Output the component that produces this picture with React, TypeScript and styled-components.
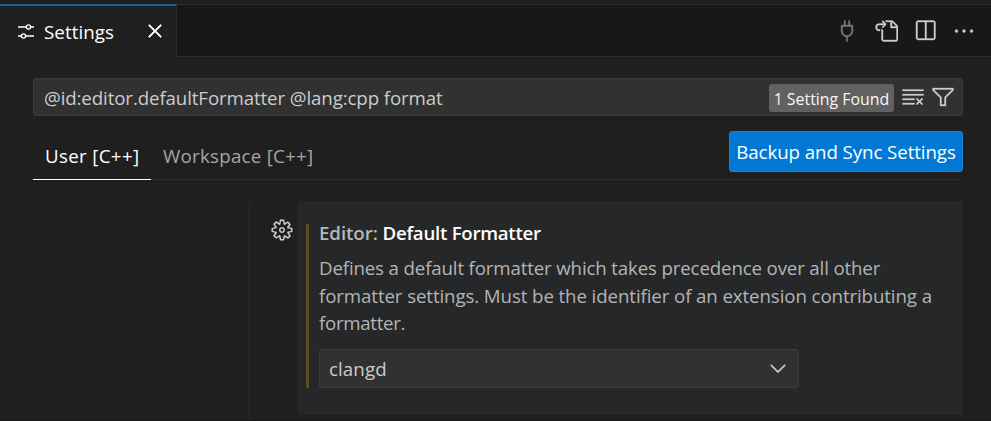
import React from "react";
import styled, { createGlobalStyle } from "styled-components";
import {
  VscChevronDown,
  VscClearAll,
  VscClose,
  VscEllipsis,
  VscFilter,
  VscGoToFile,
  VscPlug,
  VscSplitHorizontal,
} from "react-icons/vsc";

const GlobalStyle = createGlobalStyle`
  * { box-sizing: border-box; }
  body {
    margin: 0;
    overflow: hidden;
    background: #1f1f1f;
    font-family: "Open Sans", "Noto Sans", sans-serif;
    font-size: 18.7px;
    color: #cccccc;
  }
  button { font: inherit; }
  svg { display: block; flex: none; }
`;

const Text = styled.span<{ $track?: number }>`
  white-space: nowrap;
  letter-spacing: ${(p) => p.$track ?? 0}px;
`;

const Window = styled.div`
  height: 421px;
  display: flex;
  flex-direction: column;
  padding-top: 4px;
  border-bottom: 1px solid #181818;
`;

const TabBar = styled.header`
  height: 53px;
  flex: none;
  display: flex;
  background: #181818;
`;

const Tab = styled.div`
  width: 177px;
  display: flex;
  align-items: center;
  padding: 0 9px 1px 14px;
  background: #1f1f1f;
  border-top: 2px solid #16639d;
  border-right: 1px solid #2b2b2b;
  color: #ffffff;
`;

const TabTitle = styled.div`
  flex: 1;
  margin: 1px 0 0 6px;
`;

const Actions = styled.div`
  flex: 1;
  display: flex;
  justify-content: flex-end;
  align-items: center;
  gap: 15px;
  padding-right: 15px;
  border-top: 1px solid #2b2b2b;
  border-bottom: 1px solid #2b2b2b;
`;

const Action = styled.span<{ $dim?: boolean }>`
  display: flex;
  color: ${(p) => (p.$dim ? "#787878" : "#cccccc")};

  svg { stroke-width: 0.25; }
`;

const Page = styled.main`
  flex: 1;
  min-height: 0;
  display: flex;
  flex-direction: column;
  padding: 21px 28px 0 33px;
`;

const Search = styled.div`
  height: 38px;
  flex: none;
  display: flex;
  align-items: center;
  padding: 0 7px 0 10px;
  background: #313131;
  border: 1px solid #3c3c3c;
  border-radius: 3px;
`;

const Query = styled.div`
  flex: 1;
`;

const Count = styled.div`
  width: 125px;
  height: 28px;
  display: flex;
  align-items: center;
  justify-content: center;
  margin: 1px 7px 0 0;
  padding-top: 2px;
  background: #616161;
  border-radius: 3px;
  color: #f8f8f8;
  font-size: 15.9px;
`;

const SearchIcons = styled.div`
  display: flex;
  gap: 6px;

  svg { stroke-width: 0.2; }
`;

const Scopes = styled.nav`
  height: 64px;
  flex: none;
  display: flex;
  align-items: flex-end;
  border-bottom: 1px solid #2b2b2b;
`;

const Scope = styled.div<{ $active?: boolean }>`
  height: 48px;
  width: ${(p) => (p.$active ? "118px" : "auto")};
  display: flex;
  align-items: center;
  margin-bottom: -1px;
  padding: 0 0 0 12px;
  color: ${(p) => (p.$active ? "#ffffff" : "#a6a6a6")};
  border-bottom: 1px solid ${(p) => (p.$active ? "#ffffff" : "transparent")};
`;

const SyncButton = styled.button`
  width: 234px;
  height: 41px;
  margin: 0 0 7px auto;
  padding: 0;
  border: 1px solid #1684da;
  border-radius: 3px;
  background: #0078d4;
  color: #ffffff;
`;

const Body = styled.div`
  flex: 1;
  min-height: 0;
  display: flex;
  margin-top: 21px;
`;

const TocColumn = styled.div`
  width: 217px;
  border-right: 1px solid #2b2b2b;
`;

const GearColumn = styled.div`
  width: 48px;
  padding: 17px 0 0 20px;
`;

const Setting = styled.section`
  flex: 1;
  height: 214px;
  padding: 23px 0 0 8px;
  background: #262728;
`;

const Modified = styled.div`
  height: 164px;
  padding-left: 10px;
  border-left: 3px solid #5f4c24;
`;

const Title = styled.div`
  height: 19px;
  line-height: 17px;
  font-weight: 600;
  color: #b8b8b8;
`;

const Name = styled(Text)`
  color: #ffffff;
`;

const Description = styled.div`
  display: flex;
  flex-direction: column;
  margin-top: 11px;
  line-height: 27.5px;
  color: #b4b4b4;
`;

const Select = styled.div`
  width: 480px;
  height: 39px;
  display: flex;
  align-items: center;
  justify-content: space-between;
  margin-top: 12px;
  padding: 0 8px 0 9px;
  background: #313131;
  border: 1px solid #3c3c3c;
  border-radius: 3px;

  svg { stroke-width: 0.3; }
`;

const CloseIcon = styled(VscClose)`
  stroke-width: 0.4;
`;

const SlidersIcon = () => (
  <svg width="24" height="24" viewBox="0 0 24 24" fill="none" stroke="currentColor" strokeWidth="1.4">
    <path d="M4 8h8.2M16.8 8H20M4 17h3.2M11.8 17H20" />
    <circle cx="14.5" cy="8" r="2.1" />
    <circle cx="9.5" cy="17" r="2.1" />
  </svg>
);

const GearIcon = () => (
  <svg width="24" height="24" viewBox="0 0 16 16" fill="currentColor">
    <path
      fillRule="evenodd"
      clipRule="evenodd"
      d="M9.1 4.4L8.6 2H7.4l-.5 2.4-.7.3-2-1.3-.9.8 1.3 2-.2.7-2.4.5v1.2l2.4.5.3.8-1.3 2 .8.8 2-1.3.8.3.4 2.3h1.2l.5-2.4.8-.3 2 1.3.8-.8-1.3-2 .3-.8 2.3-.4V7.4l-2.4-.5-.3-.8 1.3-2-.8-.8-2 1.3-.7-.2zM9.4 1l.5 2.4L12 2.1l2 2-1.4 2.1 2.4.4v2.8l-2.4.5L14 12l-2 2-2.1-1.4-.5 2.4H6.6l-.5-2.4L4 13.9l-2-2 1.4-2.1L1 9.4V6.6l2.4-.5L2.1 4l2-2 2.1 1.4.4-2.4h2.8zm.6 7c0 1.1-.9 2-2 2s-2-.9-2-2 .9-2 2-2 2 .9 2 2zM8 9c.6 0 1-.4 1-1s-.4-1-1-1-1 .4-1 1 .4 1 1 1z"
    />
  </svg>
);

export default function App() {
  return (
    <>
      <GlobalStyle />
      <Window>
        <TabBar>
          <Tab>
            <SlidersIcon />
            <TabTitle><Text $track={0.1}>Settings</Text></TabTitle>
            <CloseIcon size={24} />
          </Tab>
          <Actions>
            <Action $dim><VscPlug size={24} /></Action>
            <Action><VscGoToFile size={24} /></Action>
            <Action><VscSplitHorizontal size={24} /></Action>
            <Action><VscEllipsis size={24} /></Action>
          </Actions>
        </TabBar>
        <Page>
          <Search>
            <Query><Text $track={-0.11}>@id:editor.defaultFormatter @lang:cpp format</Text></Query>
            <Count><Text>1 Setting Found</Text></Count>
            <SearchIcons>
              <VscClearAll size={24} />
              <VscFilter size={24} />
            </SearchIcons>
          </Search>
          <Scopes>
            <Scope $active><Text $track={0.35}>User [C++]</Text></Scope>
            <Scope><Text $track={0.27}>Workspace [C++]</Text></Scope>
            <SyncButton><Text $track={-0.07}>Backup and Sync Settings</Text></SyncButton>
          </Scopes>
          <Body>
            <TocColumn />
            <GearColumn><GearIcon /></GearColumn>
            <Setting>
              <Modified>
                <Title>
                  <Text $track={-0.08}>Editor: </Text>
                  <Name $track={-0.28}>Default Formatter</Name>
                </Title>
                <Description>
                  <Text $track={-0.15}>Defines a default formatter which takes precedence over all other</Text>
                  <Text $track={-0.1}>formatter settings. Must be the identifier of an extension contributing a</Text>
                  <Text $track={-0.3}>formatter.</Text>
                </Description>
                <Select>
                  <Text $track={0.1}>clangd</Text>
                  <VscChevronDown size={24} />
                </Select>
              </Modified>
            </Setting>
          </Body>
        </Page>
      </Window>
    </>
  );
}
